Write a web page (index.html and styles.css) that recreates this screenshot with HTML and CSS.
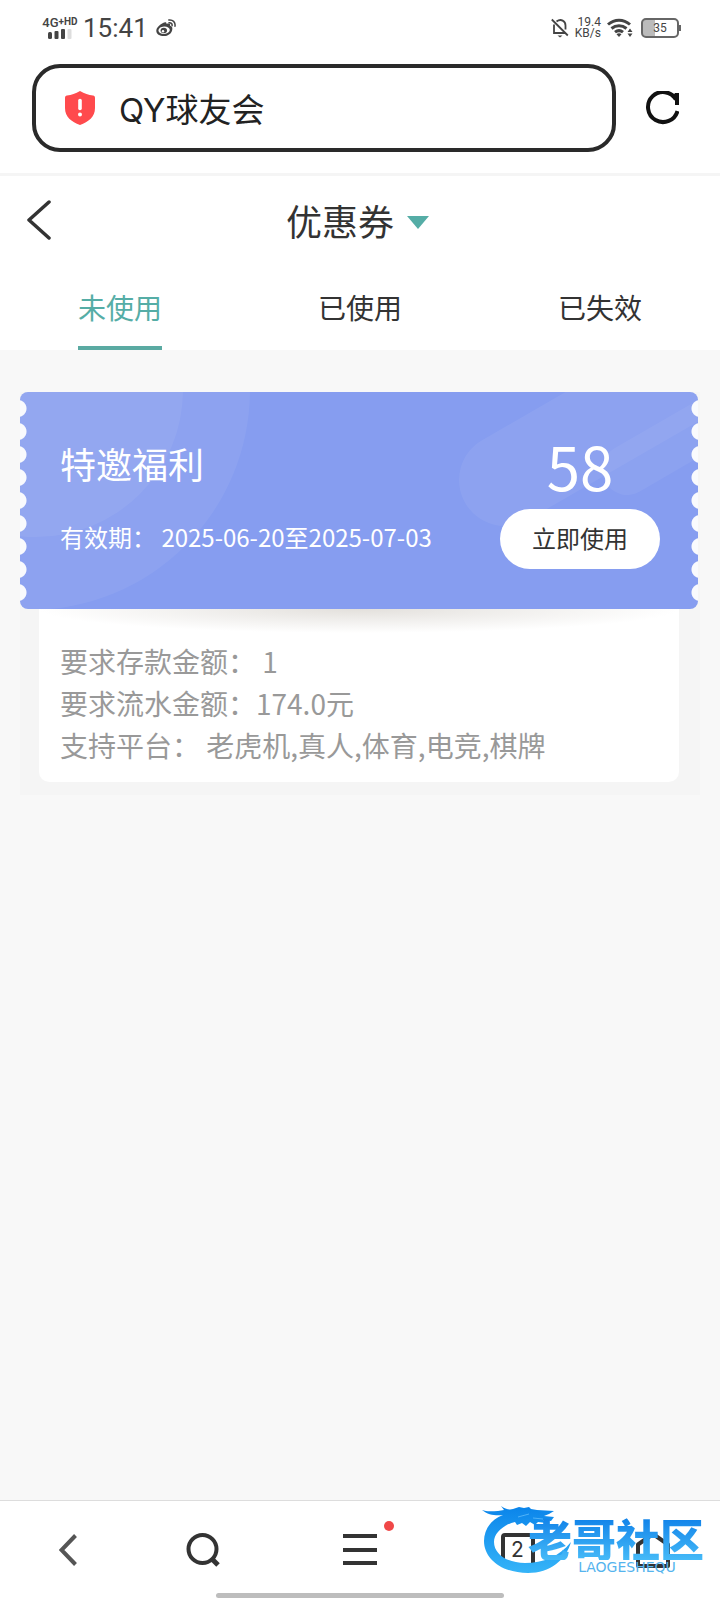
FILE: index.html
```html
<!DOCTYPE html>
<html lang="zh-CN">
  <head>
    <meta charset="utf-8" />
    <meta name="viewport" content="width=device-width, initial-scale=1" />
    <title>优惠券</title>
    <link rel="stylesheet" href="styles.css" />
  </head>

  <body>
    <div class="status-bar">
      <div class="network">
        <span class="network-type">4G<sup>+</sup><small>HD</small></span>
        <svg width="24" height="10" viewBox="0 0 24 10" fill="#444">
          <rect x="0" y="3" width="4" height="7" rx="1.5" />
          <rect x="6.5" y="2" width="4" height="8" rx="1" />
          <rect x="13" y="0" width="4" height="10" rx="1" />
          <rect x="19.500" y="0" width="4" height="10" rx="1" fill="#ddd" />
        </svg>
      </div>
      <span class="clock">15:41</span>
      <svg class="weibo" width="20" height="18" viewBox="0 0 20 18" fill="none" stroke="#444">
        <path fill="#444" stroke="none" fill-rule="evenodd" d="M7 4c2-1.300 4-.8 3.500 1 2-.8 4.300-.6 3.600 1.800 1.700.5 2.600 1.700 2.200 3.600C15.700 14.500 12 17 8 17c-4.300 0-7.700-2-7.700-5.300C.3 9 3.500 5.500 7 4zM8 7.500c-3.200.2-5.600 2-5.500 4.200.1 2 2.700 3.400 5.800 3.200s5.600-2 5.500-4.200C13.600 8.600 11 7.300 8 7.500z" />
        <ellipse cx="7.800" cy="11.500" rx="3.200" ry="2.800" fill="#444" stroke="none" />
        <circle cx="7" cy="12.200" r="1.200" fill="#fff" stroke="none" />
        <path d="M13 3.700c2-.3 3.400 1 3.100 3M12.800 1c4-.6 6.800 2.200 6.200 6.200" stroke-width="1.500" stroke-linecap="round" />
      </svg>

      <div class="status-right">
        <svg width="18" height="20" viewBox="0 0 18 20" fill="none" stroke="#444" stroke-width="1.800">
          <path d="M3 6.500V15h11.500M5.500 3.500C10 .2 14.500 3 14.500 7.500v4M.8 1.500l16 16" />
          <path d="M6.500 17.500h5L9 19.500z" fill="#444" stroke="none" />
        </svg>
        <div class="speed">
          <span>19.4</span>
          <span>KB/s</span>
        </div>
        <svg width="26" height="20" viewBox="0 0 26 20" fill="none" stroke="#444" stroke-width="3">
          <path d="M1 6.500c6.500-5.800 15.500-5.800 22 0M4.500 10.500c4.500-3.800 10.500-3.800 15 0M8 14.200c2.500-2 5.500-2 8 0" />
          <path d="M9.500 16.200c1.700-1.200 3.300-1.200 5 0L12 19zM20.500 14l2.500-3.500 2.500 3.500zM20.500 15.500L23 19l2.500-3.500z" fill="#444" stroke="none" />
        </svg>
        <div class="battery">35</div>
      </div>
    </div>

    <form class="address-bar">
      <label class="address">
        <svg width="32" height="34" viewBox="0 0 32 34">
          <path d="M16 0c4.500 2.600 8.500 4 13 4.500 1.400.3 2 1 2 2.500v10c0 9-6.500 13.700-15 17C7.500 30.700 1 26 1 17V7c0-1.500.6-2.200 2-2.500C7.500 4 11.500 2.600 16 0z" fill="#ff4a4d" />
          <path d="M16 9.500v8" stroke="#fff" stroke-width="3.600" stroke-linecap="round" />
          <circle cx="16" cy="23.500" r="2" fill="#fff" />
        </svg>
        <input type="text" value="QY球友会" aria-label="网址" />
      </label>
      <button type="button" class="reload" aria-label="刷新">
        <svg width="33" height="34" viewBox="0 0 33 34" fill="none" stroke="#111" stroke-width="4">
          <path d="M30 8.500A15 15 0 1 0 31.500 20" />
          <path d="M33 2v12h-4V8l-3-2 3-4z" fill="#111" stroke="none" />
        </svg>
      </button>
    </form>

    <header>
      <div class="title-row">
        <button type="button" class="back" aria-label="返回">
          <svg width="24" height="40" viewBox="0 0 24 40" fill="none" stroke="#333" stroke-width="3.500" stroke-linecap="round" stroke-linejoin="round">
            <path d="M22 2L2 20l20 18" />
          </svg>
        </button>
        <h1>优惠券</h1>
        <span class="caret"></span>
      </div>

      <nav class="tabs">
        <a href="#unused" class="active">未使用</a>
        <a href="#used">已使用</a>
        <a href="#expired">已失效</a>
      </nav>
    </header>

    <main>
      <article class="coupon">
        <div class="coupon-top">
          <svg class="coupon-art" viewBox="0 0 678 217" preserveAspectRatio="none" fill="#fff">
            <circle cx="10" cy="-2" r="220" fill-opacity=".06" />
            <circle cx="16" cy="-2" r="147" fill-opacity=".06" />
            <path d="M485 88l300-173" stroke="#fff" stroke-width="92" stroke-linecap="round" stroke-opacity=".06" />
            <path d="M607 78l200-116" stroke="#fff" stroke-width="50" stroke-linecap="round" stroke-opacity=".05" />
          </svg>
          <div class="coupon-info">
            <h2>特邀福利</h2>
            <p>有效期： 2025-06-20至2025-07-03</p>
          </div>
          <div class="coupon-action">
            <span class="amount">58</span>
            <button type="button">立即使用</button>
          </div>
        </div>

        <div class="coupon-details">
          <p>要求存款金额： 1</p>
          <p>要求流水金额：174.0元</p>
          <p>支持平台： 老虎机,真人,体育,电竞,棋牌</p>
        </div>
      </article>
    </main>

    <footer>
      <div class="toolbar">
        <button type="button" aria-label="后退">
          <svg width="18" height="32" viewBox="0 0 18 32" fill="none" stroke="#555" stroke-width="4">
            <path d="M16.500 1.500L2.500 16l14 14.500" />
          </svg>
        </button>
        <button type="button" aria-label="搜索">
          <svg width="34" height="34" viewBox="0 0 34 34" fill="none" stroke="#333" stroke-width="4">
            <circle cx="16.500" cy="16" r="14" />
            <path d="M26 26l6 6" stroke-width="5" />
          </svg>
        </button>
        <button type="button" class="menu" aria-label="菜单">
          <svg width="34" height="32" viewBox="0 0 34 32" fill="#333">
            <path d="M0 0h34v4H0zM0 14h34v4H0zM0 27h34v4H0z" />
          </svg>
        </button>
        <button type="button" aria-label="标签页">
          <span class="tab-count">2</span>
        </button>
        <button type="button" aria-label="主页">
          <svg width="36" height="38" viewBox="0 0 36 38" fill="none" stroke="#333" stroke-width="4" stroke-linejoin="round">
            <path d="M3 35V13.500L18 3l15 10.500V35z" />
          </svg>
        </button>
      </div>
      <div class="home-indicator"></div>

      <div class="watermark">
        <svg width="92" height="68" viewBox="0 0 92 68">
          <defs>
            <linearGradient id="swirl" x1="0" y1="0" x2="0" y2="1">
              <stop offset="0" stop-color="#0a84ea" />
              <stop offset="1" stop-color="#35b4f8" />
            </linearGradient>
          </defs>
          <path fill="url(#swirl)" d="M0 4c5 2 11 1 16 1l6-1-3-4c4 3 8 4 12 3l6-2 5 1 5-1 2 2 6 1 17 1-5 3-5 2 10 1-3 4-8-1 3 3-8-1-3 3-5-3-4 4-4-3-5 2-2-3C21 19 12 27 12 36c0 12 13 21 31 21 18 0 34-6 46-21-5 18-21 31-43 31C20 67 2 53 2 35 2 24 9 13 21 9 14 10 6 9 0 4z" />
          <path d="M36 11l11-3M51 12l10 1" stroke="#4fb2f8" stroke-width="1" />
        </svg>
        <div class="watermark-text">
          <strong>老哥社区</strong>
          <span>LAOGESHEQU</span>
        </div>
      </div>
    </footer>
  </body>
</html>
```

FILE: styles.css
```css
* {
  box-sizing: border-box;
}

body {
  margin: 0;
  min-height: 100vh;
  display: flex;
  flex-direction: column;
  background-color: #f8f8f8;
  color: #333;
  font-family: "Noto Sans CJK SC", sans-serif;
}

h1,
h2,
p {
  margin: 0;
  font-weight: inherit;
}

button {
  border: 0;
  padding: 0;
  background: none;
  color: inherit;
  font: inherit;
}

svg {
  display: block;
  flex-shrink: 0;
}

/* phone status bar */
.status-bar {
  height: 56px;
  padding: 0 41px;
  display: flex;
  align-items: center;
  background-color: #fff;
  color: #444;
  font-family: Roboto, sans-serif;
}

.network {
  width: 38px;
  margin-right: 4px;
  display: flex;
  flex-direction: column;
  align-items: center;

  & .network-type {
    font-size: 13px;
    font-weight: 500;
    line-height: 12px;
    white-space: nowrap;
  }

  & sup,
  & small {
    font-size: 10px;
    font-weight: 700;
    line-height: 0;
    vertical-align: 2px;
  }
}

.clock {
  font-size: 26px;
}

.weibo {
  margin-left: 8px;
}

.status-right {
  margin-left: auto;
  display: flex;
  align-items: center;
  gap: 6px;
}

.speed {
  display: flex;
  flex-direction: column;
  align-items: flex-end;
  font-size: 12px;
  line-height: 11px;
}

.battery {
  position: relative;
  width: 38px;
  height: 20px;
  margin-left: 2px;
  border: 2px solid #666;
  border-radius: 5px;
  background: linear-gradient(to right, #bbb 35%, #fff 35%);
  font-size: 12px;
  line-height: 16px;
  text-align: center;

  &::after {
    content: "";
    position: absolute;
    top: 5px;
    right: -4px;
    width: 2px;
    height: 6px;
    background-color: #666;
  }
}

/* browser address bar */
.address-bar {
  padding: 8px 41px 21px 32px;
  display: flex;
  align-items: center;
  gap: 30px;
  background-color: #fff;
  border-bottom: 3px solid #f5f5f5;
}

.address {
  flex-grow: 1;
  height: 88px;
  padding: 0 28px;
  display: flex;
  align-items: center;
  gap: 23px;
  border: 4px solid #2a2a2a;
  border-radius: 28px;

  & input {
    width: 100%;
    border: 0;
    padding: 4px 0 0;
    outline: 0;
    background: none;
    color: #222;
    font-family: Inter, "Noto Sans CJK SC", sans-serif;
    font-size: 33px;
    line-height: 48px;
  }
}

header {
  background-color: #fff;
}

.title-row {
  position: relative;
  height: 88px;
  padding-right: 5px;
  display: flex;
  align-items: center;
  justify-content: center;
  gap: 13px;

  & h1 {
    font-size: 36px;
    line-height: 52px;
  }
}

.back {
  position: absolute;
  left: 27px;
}

.caret {
  margin-top: 5px;
  border: 11px solid transparent;
  border-top: 13px solid #55ada6;
  border-bottom: 0;
}

.tabs {
  display: grid;
  grid-template-columns: repeat(3, 1fr);
  justify-items: center;

  & a {
    height: 86px;
    color: inherit;
    font-size: 28px;
    line-height: 86px;
    text-decoration: none;
  }

  & .active {
    color: #55ada6;
    box-shadow: inset 0 -4px #5aaaa2;
  }
}

main {
  flex-grow: 1;
  padding: 42px 20px;
}

.coupon {
  padding-bottom: 13px;
  background-color: #f5f5f5;
}

.coupon-top {
  position: relative;
  margin-right: 2px;
  padding: 34px 38px 40px 40px;
  display: flex;
  justify-content: space-between;
  overflow: hidden;
  border-radius: 8px;
  background-color: #869df0;
  color: #fff;

  /* perforated edges */
  &::before,
  &::after {
    content: "";
    position: absolute;
    top: 0;
    bottom: 0;
    left: 0;
    width: 8px;
    background: radial-gradient(circle at -2px 50%, #f9fafd 8px, transparent 9px) 0 5px / 8px 23px repeat-y;
  }

  &::after {
    left: auto;
    right: 0;
    background: radial-gradient(circle at 10px 50%, #f9fafd 8px, transparent 9px) 0 5px / 8px 23px repeat-y;
  }
}

.coupon-art {
  position: absolute;
  top: 0;
  left: 0;
  width: 100%;
  height: 100%;
}

.coupon-info {
  position: relative;
  padding-top: 11px;

  & h2 {
    margin-bottom: 30px;
    font-size: 36px;
    line-height: 52px;
  }

  & p {
    font-size: 24px;
    line-height: 36px;
  }
}

.coupon-action {
  position: relative;
  width: 160px;
  text-align: center;

  & .amount {
    display: block;
    margin-bottom: 5px;
    font-size: 60px;
    line-height: 78px;
  }

  & button {
    display: block;
    width: 100%;
    height: 60px;
    padding-bottom: 3px;
    border-radius: 30px;
    background-color: #fff;
    color: #333;
    font-size: 24px;
  }
}

.coupon-details {
  margin: 0 21px 0 19px;
  padding: 31px 21px 16px;
  border-radius: 0 0 10px 10px;
  background: radial-gradient(50% 24px at 50% 0, #e3e0dc, #fff) no-repeat 0 0 / 100% 24px #fff;
  color: #999;
  font-size: 28px;
  line-height: 42px;
}

/* browser toolbar */
footer {
  position: sticky;
  bottom: 0;
  height: 100px;
  border-top: 1px solid #ddd;
  background-color: #fff;
}

.toolbar {
  height: 98px;
  display: grid;
  grid-template-columns: 3fr 3fr 4fr 3fr 3fr;
  align-items: center;
  justify-items: center;
}

.menu {
  position: relative;

  &::after {
    content: "";
    position: absolute;
    top: -13px;
    right: -17px;
    width: 10px;
    height: 10px;
    border-radius: 50%;
    background-color: #f04848;
  }
}

.tab-count {
  display: block;
  width: 34px;
  height: 34px;
  border: 4px solid #333;
  border-radius: 4px;
  font-family: Inter, sans-serif;
  font-size: 21px;
  line-height: 26px;
}

.home-indicator {
  position: absolute;
  bottom: 2px;
  left: 30%;
  width: 40%;
  height: 5px;
  border-radius: 3px;
  background-color: #bdbdbd;
}

.watermark {
  position: absolute;
  right: 16px;
  bottom: 26px;
  display: flex;

  & svg {
    margin-right: -46px;
  }
}

.watermark-text {
  position: relative;
  padding-top: 10px;
  display: flex;
  flex-direction: column;
  align-items: center;

  & strong {
    background: linear-gradient(#0f80e8, #45baf8);
    background-clip: text;
    color: transparent;
    font-size: 44px;
    font-weight: 900;
    line-height: 44px;
  }

  & span {
    margin-left: 22px;
    color: #55b4ee;
    font-family: "DejaVu Sans", sans-serif;
    font-size: 14px;
    line-height: 14px;
  }
}
```
